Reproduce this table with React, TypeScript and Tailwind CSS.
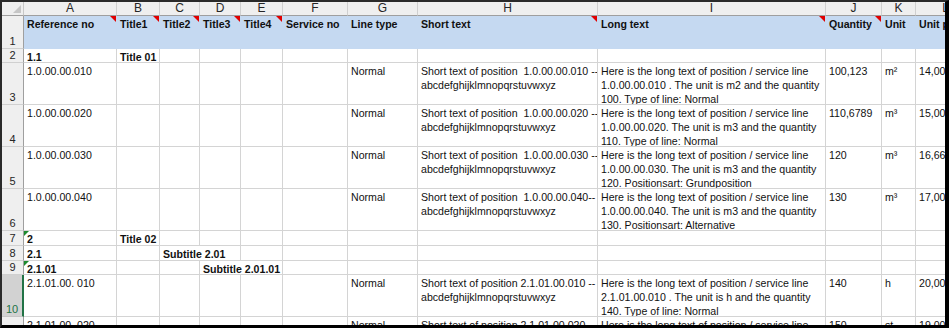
import React from 'react';

type Cell = { lines: string[]; bold?: boolean; span?: 2; flag?: 'red' | 'green' };
type Row = { n: number; head?: boolean; active?: boolean; cells: Record<string, Cell> };

const COLS = ['A', 'B', 'C', 'D', 'E', 'F', 'G', 'H', 'I', 'J', 'K', 'L'];
const ABC = 'abcdefghijklmnopqrstuvwxyz';
const LONG = 'Here is the long text of position / service line';

const t = (...lines: string[]): Cell => ({ lines });
const b = (...lines: string[]): Cell => ({ lines, bold: true });

const rows: Row[] = [
  {
    n: 1,
    head: true,
    cells: {
      A: { lines: ['Reference no'], bold: true, flag: 'red' },
      B: { lines: ['Title1'], bold: true, flag: 'red' },
      C: { lines: ['Title2'], bold: true, flag: 'red' },
      D: { lines: ['Title3'], bold: true, flag: 'red' },
      E: { lines: ['Title4'], bold: true, flag: 'red' },
      F: b('Service no'),
      G: b('Line type'),
      H: { lines: ['Short text'], bold: true, flag: 'red' },
      I: { lines: ['Long text'], bold: true, flag: 'red' },
      J: { lines: ['Quantity'], bold: true, flag: 'red' },
      K: b('Unit'),
      L: b('Unit price'),
    },
  },
  { n: 2, cells: { A: b('1.1'), B: b('Title 01') } },
  {
    n: 3,
    cells: {
      A: t('1.0.00.00.010'),
      G: t('Normal'),
      H: t('Short text of position  1.0.00.00.010 --', ABC),
      I: t(LONG, '1.0.00.00.010 . The unit is m2 and the quantity', '100. Type of line: Normal'),
      J: t('100,123'),
      K: t('m²'),
      L: t('14,00'),
    },
  },
  {
    n: 4,
    cells: {
      A: t('1.0.00.00.020'),
      G: t('Normal'),
      H: t('Short text of position  1.0.00.00.020 --', ABC),
      I: t(LONG, '1.0.00.00.020. The unit is m3 and the quantity', '110. Type of line: Normal'),
      J: t('110,6789'),
      K: t('m³'),
      L: t('15,00'),
    },
  },
  {
    n: 5,
    cells: {
      A: t('1.0.00.00.030'),
      G: t('Normal'),
      H: t('Short text of position  1.0.00.00.030 --', ABC),
      I: t(LONG, '1.0.00.00.030. The unit is m3 and the quantity', '120. Positionsart: Grundposition'),
      J: t('120'),
      K: t('m³'),
      L: t('16,66'),
    },
  },
  {
    n: 6,
    cells: {
      A: t('1.0.00.00.040'),
      G: t('Normal'),
      H: t('Short text of position  1.0.00.00.040--', ABC),
      I: t(LONG, '1.0.00.00.040. The unit is m3 and the quantity', '130. Positionsart: Alternative'),
      J: t('130'),
      K: t('m³'),
      L: t('17,00'),
    },
  },
  { n: 7, cells: { A: { lines: ['2'], bold: true, flag: 'green' }, B: b('Title 02') } },
  { n: 8, cells: { A: b('2.1'), C: { lines: ['Subtitle 2.01'], bold: true, span: 2 } } },
  {
    n: 9,
    cells: {
      A: { lines: ['2.1.01'], bold: true, flag: 'green' },
      D: { lines: ['Subtitle 2.01.01'], bold: true, span: 2 },
    },
  },
  {
    n: 10,
    active: true,
    cells: {
      A: t('2.1.01.00. 010'),
      G: t('Normal'),
      H: t('Short text of position 2.1.01.00.010 --', ABC),
      I: t(LONG, '2.1.01.00.010 . The unit is h and the quantity', '140. Type of line: Normal'),
      J: t('140'),
      K: t('h'),
      L: t('20,00'),
    },
  },
  {
    n: 11,
    cells: {
      A: t('2.1.01.00. 020'),
      G: t('Normal'),
      H: t('Short text of position 2.1.01.00.020--', ABC),
      I: t(LONG, '2.1.01.00.020. The unit is st and the quantity', '150. Type of line: Normal'),
      J: t('150'),
      K: t('st'),
      L: t('19,00'),
    },
  },
];

function RowHeader({ row }: { row: Row }) {
  return (
    <div
      className={
        row.active
          ? 'flex items-end justify-center border-b border-r-2 border-b-[#c6c6c6] border-r-[#217346] bg-[#d2d2d2] text-[11px] leading-[14px] text-[#217346]'
          : 'flex items-end justify-center border-b border-r border-b-[#d0d0d0] border-r-[#9f9f9f] bg-[#efefef] text-[11px] leading-[14px] text-[#262626]'
      }
    >
      {row.n}
    </div>
  );
}

function SheetCell({ cell, head }: { cell?: Cell; head?: boolean }) {
  const base = head
    ? 'relative overflow-hidden border-b border-r border-[#c5d9f1] bg-[#c5d9f1] px-[3px] pt-px'
    : 'relative overflow-hidden border-b border-r border-[#d4d4d4] bg-white px-[3px] pt-px';
  const span = cell?.span === 2 ? ' col-span-2' : '';
  return (
    <div className={base + span}>
      {cell?.lines.map((line, i) => (
        <div
          key={i}
          className={
            (cell.bold ? 'font-bold ' : '') + 'whitespace-pre text-[10.6px] leading-[14px] text-[#111]'
          }
        >
          {line}
        </div>
      ))}
      {cell?.flag === 'red' && (
        <span className="absolute right-0 top-0 h-0 w-0 border-l-[6px] border-t-[6px] border-l-transparent border-t-[#e00000]" />
      )}
      {cell?.flag === 'green' && (
        <span className="absolute left-0 top-0 h-0 w-0 border-r-[5px] border-t-[5px] border-r-transparent border-t-[#1e8a2e]" />
      )}
    </div>
  );
}

export default function App() {
  return (
    <div
      className="h-[328px] w-[949px] overflow-hidden border-b-[3px] border-l-2 border-r-4 border-t-2 border-b-black border-l-[#2a2a2a] border-r-black border-t-[#2a2a2a] bg-white"
      style={{ fontFamily: '"Liberation Sans", Arial, sans-serif' }}
    >
      <div className="grid grid-cols-[22px_93px_43px_40px_41px_42px_65px_70px_180px_228px_56px_34px_60px] grid-rows-[14px_33px_14px_42px_42px_42px_42px_15px_15px_14px_42px_42px]">
        {/* corner */}
        <div className="relative border-b border-r border-b-[#9f9f9f] border-r-[#c8c8c8] bg-[#efefef]">
          <span className="absolute bottom-[2px] right-[2px] h-0 w-0 border-b-[8px] border-l-[8px] border-b-[#c6c6c6] border-l-transparent" />
        </div>
        {COLS.map((c) => (
          <div
            key={c}
            className="flex items-center justify-center border-b border-r border-b-[#9f9f9f] border-r-[#d0d0d0] bg-[#efefef] text-[12px] leading-[13px] text-[#262626]"
          >
            {c}
          </div>
        ))}

        {rows.map((row) => {
          const out: React.ReactNode[] = [<RowHeader key={'h' + row.n} row={row} />];
          let skip = false;
          COLS.forEach((c) => {
            if (skip) {
              skip = false;
              return;
            }
            const cell = row.cells[c];
            if (cell?.span === 2) skip = true;
            out.push(<SheetCell key={row.n + c} cell={cell} head={row.head} />);
          });
          return <React.Fragment key={row.n}>{out}</React.Fragment>;
        })}
      </div>
    </div>
  );
}
